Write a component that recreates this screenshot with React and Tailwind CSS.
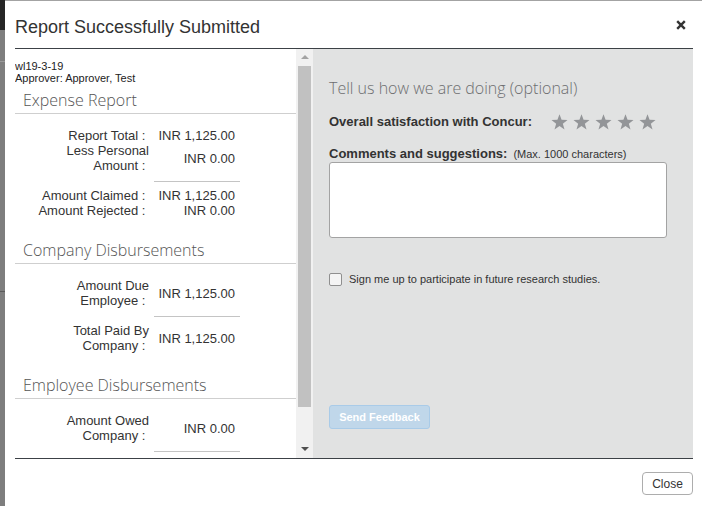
import React from "react";

const Row = ({ label, value }) => (
  <div className="flex items-center">
    <div className="ml-[10px] w-[124px] text-right leading-[15px]">{label}{"\u00a0"}</div>
    <div className="ml-[5px] w-[86px] pr-[5px] text-right leading-[15px]">{value}</div>
  </div>
);

const Rule = ({ className }) => (
  <div className={`ml-[139px] h-px w-[86px] bg-[#c4c4c4] ${className}`} />
);

const Heading = ({ children, className }) => (
  <div
    className={`h-[24px] border-b border-[#cfcfcf] pl-[8px] text-[16px] font-light leading-[20px] text-[#555] ${className}`}
    style={{ fontFamily: '"Open Sans", sans-serif' }}
  >
    {children}
  </div>
);

const Star = () => (
  <svg width="17" height="16" viewBox="0 0 24 23">
    <polygon
      points="12,0.5 15,8.3 23.5,8.6 16.8,13.9 19.2,22.3 12,17.4 4.8,22.3 7.2,13.9 0.5,8.6 9,8.3"
      fill="#939598"
    />
  </svg>
);

const App = () => {
  return (
    <div
      className="flex h-[506px] w-[702px] overflow-hidden bg-white text-[13px] text-[#333]"
      style={{ fontFamily: '"Liberation Sans", Arial, sans-serif' }}
    >
      {/* backdrop strip */}
      <div className="flex w-[5px] flex-col bg-[#7e7e7e]">
        <div className="h-[30px] bg-[#262626]" />
        <div className="mt-[31px] h-px bg-[#9a9a9a]" />
        <div className="mt-[229px] h-px bg-[#5a5a5a]" />
      </div>

      {/* modal */}
      <div className="flex flex-1 flex-col border-t border-[#a3a3a3] pl-[10px] pr-[9px]">
        {/* header */}
        <div className="flex h-[48px] items-center justify-between border-b border-[#3c4146]">
          <div className="pt-[4px] text-[18px] leading-[22px] text-[#333]">Report Successfully Submitted</div>
          <svg width="10" height="10" viewBox="0 0 10 10" className="mr-[7px]">
            <path d="M1.2 1.2 L8.8 8.8 M8.8 1.2 L1.2 8.8" stroke="#333" strokeWidth="2.4" />
          </svg>
        </div>

        {/* body */}
        <div className="flex h-[410px] border-b border-[#3c4146]">
          {/* left summary */}
          <div className="flex w-[298px]">
            <div className="w-[281px] overflow-hidden">
              <div className="pt-[11px] text-[11px] leading-[12px] text-[#222]">
                <div>wl19-3-19</div>
                <div>Approver: Approver, Test</div>
              </div>

              <Heading className="mt-[6px]">Expense Report</Heading>
              <div className="mt-[14px]">
                <Row label="Report Total :" value="INR 1,125.00" />
                <Row label="Less Personal Amount :" value="INR 0.00" />
              </div>
              <Rule className="mt-[8px]" />
              <div className="mt-[6px]">
                <Row label="Amount Claimed :" value="INR 1,125.00" />
                <Row label="Amount Rejected :" value="INR 0.00" />
              </div>

              <Heading className="mt-[22px]">Company Disbursements</Heading>
              <div className="mt-[14px]">
                <Row label="Amount Due Employee :" value="INR 1,125.00" />
              </div>
              <Rule className="mt-[8px]" />
              <div className="mt-[6px]">
                <Row label="Total Paid By Company :" value="INR 1,125.00" />
              </div>

              <Heading className="mt-[22px]">Employee Disbursements</Heading>
              <div className="mt-[14px]">
                <Row label="Amount Owed Company :" value="INR 0.00" />
              </div>
              <Rule className="mt-[8px]" />
            </div>

            {/* scrollbar */}
            <div className="flex w-[17px] flex-col items-center bg-[#f1f1f1]">
              <div className="mt-[6px] h-0 w-0 border-x-[4px] border-b-[4px] border-x-transparent border-b-[#a3a3a3]" />
              <div className="mt-[7px] h-[341px] w-[13px] bg-[#c1c1c1]" />
              <div className="mt-[40px] h-0 w-0 border-x-[4px] border-t-[4px] border-x-transparent border-t-[#505050]" />
            </div>
          </div>

          {/* right feedback */}
          <div className="flex flex-1 flex-col bg-[#e1e2e2] pl-[16px]">
            <div
              className="mt-[29px] text-[16px] font-light leading-[20px] text-[#6d6e70]"
              style={{ fontFamily: '"Open Sans", sans-serif' }}
            >
              Tell us how we are doing (optional)
            </div>

            <div className="mt-[16px] flex h-[16px] items-center">
              <div className="w-[222px] font-bold leading-[16px]">Overall satisfaction with Concur:</div>
              <div className="flex gap-[5px]">
                <Star />
                <Star />
                <Star />
                <Star />
                <Star />
              </div>
            </div>

            <div className="mt-[16px] flex items-baseline leading-[16px]">
              <span className="font-bold">Comments and suggestions:</span>
              <span className="ml-[6px] text-[11px]">(Max. 1000 characters)</span>
            </div>
            <div className="h-[76px] w-[338px] rounded-[3px] border border-[#a3a3a3] bg-white" />

            <label className="mt-[34px] flex items-center">
              <span className="h-[13px] w-[13px] rounded-[2px] border border-[#8f8f8f] bg-[#f4f4f4]" />
              <span className="ml-[7px] text-[11px] leading-[14px] text-[#333]">
                Sign me up to participate in future research studies.
              </span>
            </label>

            <div className="mt-[119px] flex h-[24px] w-[101px] items-center justify-center rounded-[3px] border border-[#a9cbe8] bg-[#c0d7ea] text-[11px] font-bold text-white">
              Send Feedback
            </div>
          </div>
        </div>

        {/* footer */}
        <div className="flex justify-end pt-[13px]">
          <div className="flex h-[23px] w-[51px] items-center justify-center rounded-[4px] border border-[#adadad] bg-white text-[12px] text-[#333]">
            Close
          </div>
        </div>
      </div>
    </div>
  );
};

export default App;
